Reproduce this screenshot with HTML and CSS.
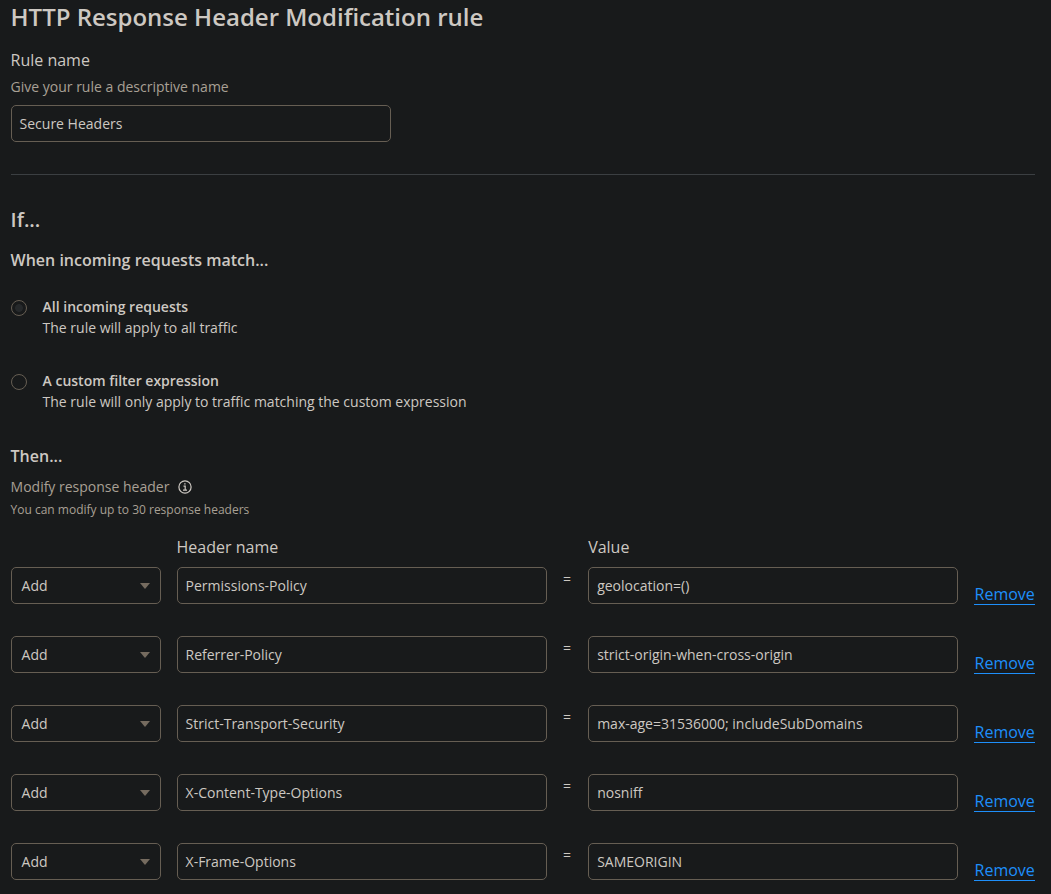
FILE: index.html
```html
<!DOCTYPE html>
<html lang="en"><head><meta charset="utf-8"><title>HTTP Response Header Modification rule</title><link rel="stylesheet" href="styles.css"></head>
<body>
<main class="page">
<h1 class="title">HTTP Response Header Modification rule</h1>
<div class="label">Rule name</div>
<div class="hint">Give your rule a descriptive name</div>
<div class="field name-field">Secure Headers</div>
<div class="divider"></div>
<h2 class="if">If...</h2>
<h3 class="match">When incoming requests match...</h3>
<div class="option"><span class="radio checked"></span><div><div class="strong">All incoming requests</div><div>The rule will apply to all traffic</div></div></div>
<div class="option"><span class="radio"></span><div><div class="strong">A custom filter expression</div><div>The rule will only apply to traffic matching the custom expression</div></div></div>
<h3 class="then">Then...</h3>
<div class="modify">Modify response header <svg class="info" viewBox="0 0 14 14"><circle cx="7" cy="7" r="6.1"/><path d="M5.5 6.2h1.7v4M5 10.2h4M6.2 3.9h1.4"/></svg></div>
<div class="limit">You can modify up to 30 response headers</div>
<div class="columns"><span></span><span>Header name</span><span></span><span>Value</span></div>
<div class="row"><div class="field select">Add<i class="caret"></i></div><div class="field">Permissions-Policy</div><span class="eq">=</span><div class="field">geolocation=()</div><a class="remove">Remove</a></div>
<div class="row"><div class="field select">Add<i class="caret"></i></div><div class="field">Referrer-Policy</div><span class="eq">=</span><div class="field">strict-origin-when-cross-origin</div><a class="remove">Remove</a></div>
<div class="row"><div class="field select">Add<i class="caret"></i></div><div class="field">Strict-Transport-Security</div><span class="eq">=</span><div class="field">max-age=31536000; includeSubDomains</div><a class="remove">Remove</a></div>
<div class="row"><div class="field select">Add<i class="caret"></i></div><div class="field">X-Content-Type-Options</div><span class="eq">=</span><div class="field">nosniff</div><a class="remove">Remove</a></div>
<div class="row"><div class="field select">Add<i class="caret"></i></div><div class="field">X-Frame-Options</div><span class="eq">=</span><div class="field">SAMEORIGIN</div><a class="remove">Remove</a></div>
</main>
</body></html>
```
FILE: styles.css
```css
*{box-sizing:border-box}
body{margin:0;height:894px;overflow:hidden;background:#181a1b;color:#cdc8c2;font:14px/21px "Open Sans","Noto Sans",sans-serif}
.page{padding:2px 16px 0 10.55px}
h1,h2,h3{margin:0;font-weight:600}
.title{font-size:24px;line-height:30px}
.label{margin-top:16px;font-size:16px;line-height:24px}
.hint{margin-top:4px;line-height:21px;color:#a8a095}
.field{height:37px;border:1px solid #665e53;border-radius:5px;padding:0 8px;line-height:35px;white-space:nowrap}
.name-field{width:380px;margin-top:8px}
.divider{margin-top:32px;height:1px;background:#3b3f42}
.if{margin-top:30px;font-size:20px;line-height:30px}
.match{margin-top:13px;font-size:16px;line-height:24px}
.option{display:flex;height:42px;margin-top:24px}
.option + .option{margin-top:32px}
.strong{font-weight:600}
.radio{width:16px;height:16px;margin:4px 16px 0 0;border:1px solid #665e53;border-radius:50%}
.checked{background:radial-gradient(circle,#26292b 0 3.5px,transparent 4.2px)}
.then{margin-top:32px;font-size:16px;line-height:24px}
.modify{display:flex;align-items:center;margin-top:8px;color:#a8a095}
.info{width:14px;height:14px;margin-left:8.5px;fill:none;stroke:#cdc8c2;stroke-width:1.2}
.limit{margin-top:4px;font-size:12px;line-height:18px;color:#a8a095}
.columns,.row{display:grid;grid-template-columns:150px 370px 9.6px 370px 60.6px;column-gap:16px}
.columns{margin-top:16px;font-size:16px;line-height:24px}
.row{height:37px;margin-top:8px}
.row + .row{margin-top:32px}
.select{display:flex;justify-content:space-between;align-items:center;padding:0 10px}
.caret{border:5px solid transparent;border-top:6px solid #756b5f;border-bottom:0}
.eq{padding-left:.5px;line-height:24px}
.remove{align-self:start;margin-top:17px;padding-left:.4px;font-size:16px;line-height:21px;height:21px;color:#1e8ffa;border-bottom:1px solid}
```
